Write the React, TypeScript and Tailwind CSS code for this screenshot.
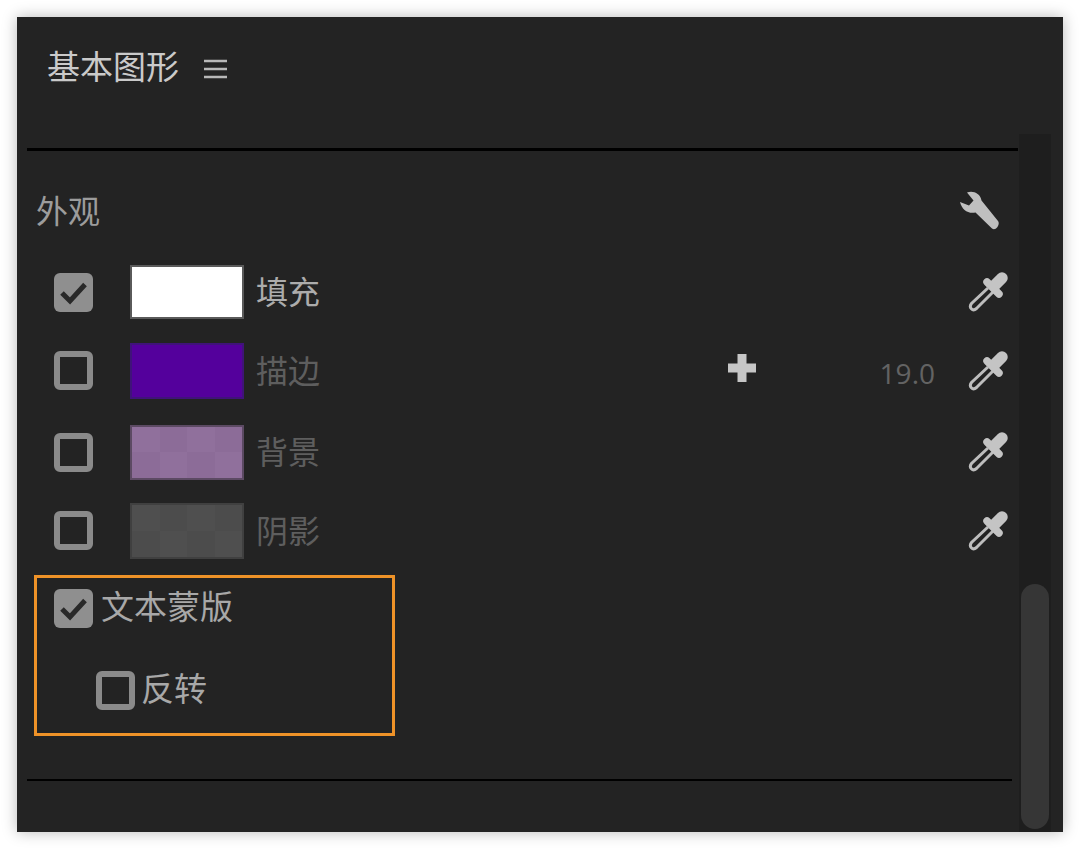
const cjk = 'font-["Noto_Sans_CJK_SC","Noto_Sans_CJK_JP",sans-serif]'

function Checkbox({ checked }: { checked?: boolean }) {
  if (!checked) {
    return <div className="w-[39px] h-[39px] shrink-0 rounded-[6px] border-[6px] border-[#8a8a8a]" />
  }
  return (
    <div className="w-[39px] h-[39px] shrink-0 rounded-[6px] bg-[#8f8f8f]">
      <svg viewBox="0 0 39 39" className="w-full h-full">
        <path d="M8 20 L16 28 L31 11.5" fill="none" stroke="#292929" strokeWidth="5" />
      </svg>
    </div>
  )
}

function Eyedropper() {
  return (
    <svg viewBox="0 0 40 40" className="w-10 h-10 shrink-0">
      <path d="M20 16 L3.5 31.5 C0.5 35.5 4.5 40 8.5 36.5 L25 20" fill="none" stroke="#bdbdbd" strokeWidth="3" />
      <path d="M27 13 L34 6" stroke="#c4c4c4" strokeWidth="11.5" strokeLinecap="round" />
      <path d="M19 10 L31 22" stroke="#c4c4c4" strokeWidth="7.5" strokeLinecap="round" />
      <path d="M22 13 L27 8 L33 14 L28 19 Z" fill="#c4c4c4" />
    </svg>
  )
}

function Wrench() {
  return (
    <svg viewBox="0 0 40 40" className="w-10 h-10">
      <path
        d="M0 11 L9 14.5 L13.5 9.5 L7 1.5 C13 -0.5 20 2 21.5 9.5 L38 30 C40.5 33 36 40.5 32 37.5 L15.5 21.5 C8 23 2 19 0 11 Z"
        fill="#bfbfbf"
      />
    </svg>
  )
}

function Swatch({ tones, className }: { tones?: string[]; className: string }) {
  return (
    <div className={`w-[114px] shrink-0 ${className}`}>
      {tones && (
        <div className="grid grid-cols-4 grid-rows-2 w-full h-full">
          {[0, 1, 0, 1, 1, 0, 1, 0].map((t, i) => (
            <div key={i} style={{ backgroundColor: tones[t] }} />
          ))}
        </div>
      )}
    </div>
  )
}

export default function App() {
  return (
    <div className={`min-h-screen bg-white pl-[17px] pt-[17px] ${cjk}`}>
      <div className="w-[1046px] h-[815px] bg-[#232323] shadow-[0_0_14px_rgba(0,0,0,0.28)] flex flex-col">
        {/* Header */}
        <div className="h-[117px] pb-[15px] pl-[30px] flex items-center gap-[25px] shrink-0">
          <span className="pb-[5px] text-[33px] leading-none text-[#cacaca]">基本图形</span>
          <svg viewBox="0 0 23 20" className="w-[23px] h-5 translate-y-[1px]">
            <path d="M0 2 H23 M0 10 H23 M0 18 H23" stroke="#b8b8b8" strokeWidth="2.6" />
          </svg>
        </div>

        <div className="flex flex-1 min-h-0">
          <div className="w-[1002px] pt-[14px]">
            <div className="h-[3px] ml-[10px] mr-[1px] bg-black" />

            {/* Appearance */}
            <div className="mt-[36px] h-12 pl-[19px] pr-[19px] flex items-center justify-between">
              <span className="pb-[5px] text-[32px] leading-none text-[#9c9c9c]">外观</span>
              <Wrench />
            </div>

            {/* Fill */}
            <div className="mt-[18px] h-[78px] pl-[37px] pr-[11px] flex items-center">
              <Checkbox checked />
              <Swatch className="ml-[37px] h-[54px] bg-white border-2 border-[#5a5a5a]" />
              <span className="ml-[12px] pb-[4px] text-[32px] leading-none text-[#acacac]">填充</span>
              <div className="ml-auto"><Eyedropper /></div>
            </div>

            {/* Stroke */}
            <div className="h-[79px] pl-[37px] pr-[11px] flex items-center">
              <Checkbox />
              <Swatch className="ml-[37px] h-[56px] bg-[#54009c] border-2 border-[#40137a]" />
              <span className="ml-[12px] pb-[4px] text-[32px] leading-none text-[#5e5e5e]">描边</span>
              <svg viewBox="0 0 30 30" className="w-[30px] h-[30px] ml-[407px] -translate-y-[3px]">
                <path d="M15 1 V29 M1 15 H29" stroke="#c6c6c6" strokeWidth="9" />
              </svg>
              <span className="ml-auto mr-[33px] pt-[4px] text-[28px] leading-none font-medium text-[#636363] font-['Open_Sans',sans-serif]">19.0</span>
              <Eyedropper />
            </div>

            {/* Background */}
            <div className="h-[84px] pl-[37px] pr-[11px] flex items-center">
              <Checkbox />
              <Swatch tones={['#90709c', '#8c6c98']} className="ml-[37px] h-[55px] border-2 border-[#5c4a63]" />
              <span className="ml-[12px] pb-[4px] text-[32px] leading-none text-[#5e5e5e]">背景</span>
              <div className="ml-auto"><Eyedropper /></div>
            </div>

            {/* Shadow */}
            <div className="h-[73px] pl-[37px] pr-[11px] flex items-center">
              <Checkbox />
              <Swatch tones={['#4f4f4f', '#4c4c4c']} className="ml-[37px] h-[56px] border-2 border-[#404040]" />
              <span className="ml-[12px] pb-[4px] text-[32px] leading-none text-[#5e5e5e]">阴影</span>
              <div className="ml-auto"><Eyedropper /></div>
            </div>

            {/* Text mask, highlighted */}
            <div className="mt-[8px] ml-[17px] w-[361px] h-[161px] border-[3px] border-[#ee9228] pl-[17px] pt-[11px]">
              <div className="flex items-center gap-[8px]">
                <Checkbox checked />
                <span className="pb-[6px] text-[33px] leading-none text-[#a8a8a8]">文本蒙版</span>
              </div>
              <div className="mt-[43px] ml-[42px] flex items-center gap-[6px]">
                <Checkbox />
                <span className="pb-[6px] text-[33px] leading-none text-[#a8a8a8]">反转</span>
              </div>
            </div>

            <div className="mt-[43px] h-[2px] ml-[10px] mr-[7px] bg-black" />
          </div>

          {/* Scrollbar */}
          <div className="w-[32px] bg-[#1e1e1e] flex flex-col justify-end px-[2px] pb-[3px]">
            <div className="h-[245px] rounded-full bg-[#363636]" />
          </div>
        </div>
      </div>
    </div>
  )
}
